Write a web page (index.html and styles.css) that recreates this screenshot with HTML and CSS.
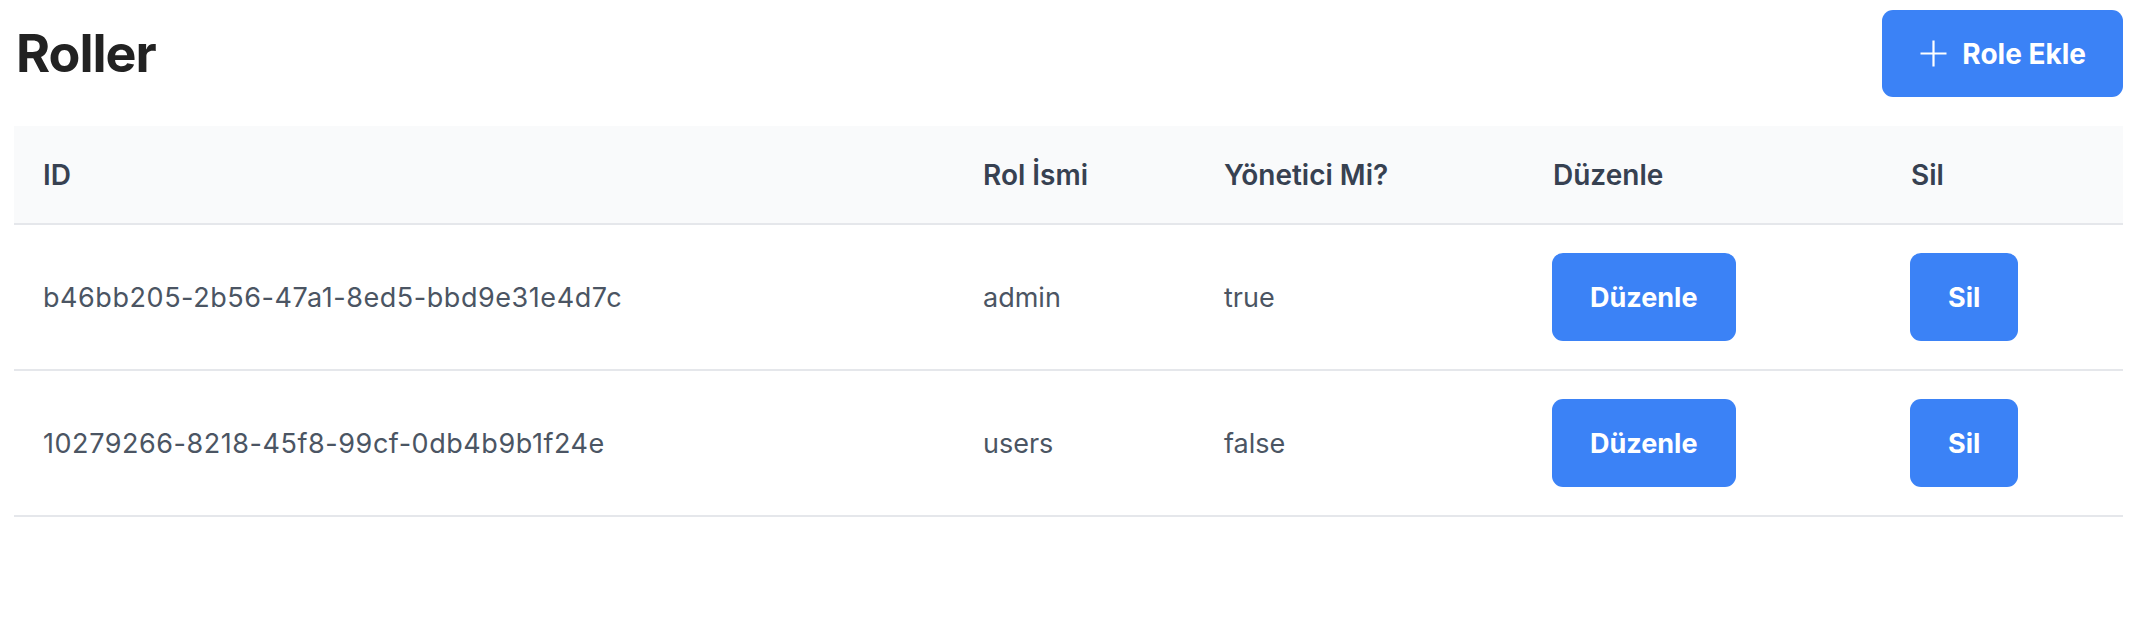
FILE: index.html
```html
<!DOCTYPE html>
<html lang="tr">
<head>
<meta charset="utf-8">
<title>Roller</title>
<link rel="stylesheet" href="styles.css">
</head>
<body>
<div class="page">
  <div class="topbar">
    <h1 class="title">Roller</h1>
    <button class="btn btn-add">
      <svg class="plus" width="27" height="27" viewBox="0 0 27 27" aria-hidden="true">
        <path d="M13.5 0.5V26.5M0.5 13.5H26.5" stroke="#fff" stroke-width="2.2" fill="none"/>
      </svg>
      <span>Role Ekle</span>
    </button>
  </div>
  <table class="roles">
    <thead>
      <tr>
        <th class="c-id">ID</th>
        <th class="c-name">Rol İsmi</th>
        <th class="c-admin">Yönetici Mi?</th>
        <th class="c-edit">Düzenle</th>
        <th class="c-del">Sil</th>
      </tr>
    </thead>
    <tbody>
      <tr>
        <td class="uuid">b46bb205-2b56-47a1-8ed5-bbd9e31e4d7c</td>
        <td>admin</td>
        <td>true</td>
        <td><button class="btn btn-row">Düzenle</button></td>
        <td><button class="btn btn-row">Sil</button></td>
      </tr>
      <tr>
        <td class="uuid">10279266-8218-45f8-99cf-0db4b9b1f24e</td>
        <td>users</td>
        <td>false</td>
        <td><button class="btn btn-row">Düzenle</button></td>
        <td><button class="btn btn-row">Sil</button></td>
      </tr>
    </tbody>
  </table>
</div>
</body>
</html>
```

FILE: styles.css
```css
* { box-sizing: border-box; }
html, body { margin: 0; padding: 0; background: #fff; }
body { font-family: Inter, "Noto Sans", sans-serif; }

.page {
  padding: 10px 23px 0 14px;
}

.topbar {
  display: flex;
  justify-content: space-between;
  align-items: center;
  height: 87px;
  margin-bottom: 29px;
}

.title {
  margin: 0 0 0 2px;
  font-size: 52px;
  font-weight: 700;
  color: #222222;
  letter-spacing: -1px;
  line-height: 1;
}

.btn {
  font-family: Inter, "Noto Sans", sans-serif;
  border: none;
  background: #3b82f6;
  color: #fff;
  font-weight: 700;
  border-radius: 11px;
  cursor: pointer;
}

.btn-add {
  display: flex;
  align-items: center;
  gap: 15px;
  height: 87px;
  padding: 0 37px 0 38px;
  font-size: 28px;
}

.plus { display: block; }

.roles {
  width: 100%;
  border-collapse: collapse;
  table-layout: fixed;
}

.roles th {
  background: #f9fafb;
  height: 98px;
  padding: 0 29px;
  text-align: left;
  font-size: 28px;
  font-weight: 600;
  color: #374151;
  border-bottom: 2px solid #e5e7eb;
}

.c-id { width: 940px; }
.c-name { width: 241px; }
.c-admin { width: 329px; }
.c-edit { width: 358px; }
.c-del { width: 241px; }

.roles td {
  height: 146px;
  padding: 0 29px;
  font-size: 27px;
  color: #4b5563;
  border-bottom: 2px solid #e5e7eb;
  vertical-align: middle;
  white-space: nowrap;
}

.roles td.uuid { letter-spacing: 0.55px; }

.roles td:nth-child(4),
.roles td:nth-child(5) { padding-left: 28px; }

.btn-row {
  height: 88px;
  padding: 0 38px;
  font-size: 27px;
}
```
